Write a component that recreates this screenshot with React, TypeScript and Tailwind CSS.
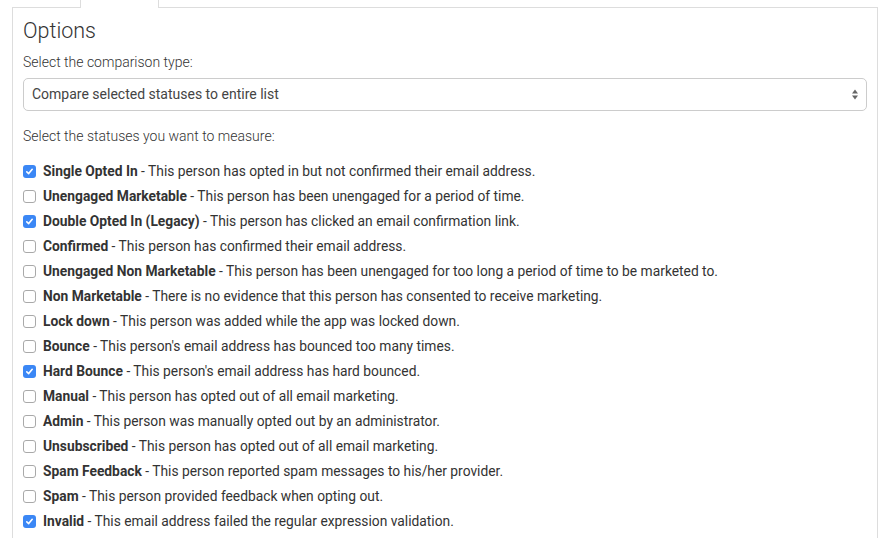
import React from 'react';

const statuses: { name: string; desc: string; checked: boolean }[] = [
  { name: 'Single Opted In', desc: 'This person has opted in but not confirmed their email address.', checked: true },
  { name: 'Unengaged Marketable', desc: 'This person has been unengaged for a period of time.', checked: false },
  { name: 'Double Opted In (Legacy)', desc: 'This person has clicked an email confirmation link.', checked: true },
  { name: 'Confirmed', desc: 'This person has confirmed their email address.', checked: false },
  { name: 'Unengaged Non Marketable', desc: 'This person has been unengaged for too long a period of time to be marketed to.', checked: false },
  { name: 'Non Marketable', desc: 'There is no evidence that this person has consented to receive marketing.', checked: false },
  { name: 'Lock down', desc: 'This person was added while the app was locked down.', checked: false },
  { name: 'Bounce', desc: "This person's email address has bounced too many times.", checked: false },
  { name: 'Hard Bounce', desc: "This person's email address has hard bounced.", checked: true },
  { name: 'Manual', desc: 'This person has opted out of all email marketing.', checked: false },
  { name: 'Admin', desc: 'This person was manually opted out by an administrator.', checked: false },
  { name: 'Unsubscribed', desc: 'This person has opted out of all email marketing.', checked: false },
  { name: 'Spam Feedback', desc: 'This person reported spam messages to his/her provider.', checked: false },
  { name: 'Spam', desc: 'This person provided feedback when opting out.', checked: false },
  { name: 'Invalid', desc: 'This email address failed the regular expression validation.', checked: true },
];

function Box({ checked }: { checked: boolean }) {
  if (checked) {
    return (
      <span className="w-[13px] h-[13px] rounded-[3px] bg-[#3b87f5] flex items-center justify-center shrink-0">
        <svg width="9" height="9" viewBox="0 0 9 9">
          <path d="M1.8 4.8 L3.7 6.6 L7.2 2.3" fill="none" stroke="#fff" strokeWidth="1.6" strokeLinecap="round" strokeLinejoin="round" />
        </svg>
      </span>
    );
  }
  return <span className="w-[13px] h-[13px] rounded-[3px] border border-[#a9a9a9] bg-white shrink-0" />;
}

export default function App() {
  return (
    <div className="w-[891px] h-[538px] overflow-hidden bg-white text-[#333] font-['Roboto',sans-serif]">
      {/* tabs */}
      <div className="flex h-[8px] ml-[12px] w-[866px]">
        <div className="w-[68px] border-b border-[#ddd]" />
        <div className="w-[79px] border-x border-[#ddd]" />
        <div className="flex-1 border-b border-[#ddd]" />
      </div>
      <div className="ml-[12px] w-[866px] h-[540px] border-x border-[#ddd] px-[10px]">
        <h3 className="text-[21.5px] font-light leading-none pt-[12px] text-[#333]">Options</h3>
        <div className="text-[14px] font-light mt-[10px] leading-[20px]">Select the comparison type:</div>
        <div className="mt-[6px] h-[33px] border border-[#ccc] rounded-[5px] flex items-center justify-between pl-[8px] pr-[7px] text-[14px] text-[#444]">
          <span>Compare selected statuses to entire list</span>
          <svg width="8" height="13" viewBox="0 0 8 13">
            <path d="M4 1.5 L7 5.5 L1 5.5 Z" fill="#666" />
            <path d="M4 11.5 L7 7.5 L1 7.5 Z" fill="#666" />
          </svg>
        </div>
        <div className="text-[14px] font-light mt-[15px] leading-[20px]">Select the statuses you want to measure:</div>
        <div className="mt-[13px] flex flex-col">
          {statuses.map(s => (
            <div key={s.name} className="h-[25px] flex items-center gap-[7px] text-[13.8px]">
              <Box checked={s.checked} />
              <span>
                <b className="font-bold text-[#333]">{s.name}</b> - {s.desc}
              </span>
            </div>
          ))}
        </div>
      </div>
    </div>
  );
}
